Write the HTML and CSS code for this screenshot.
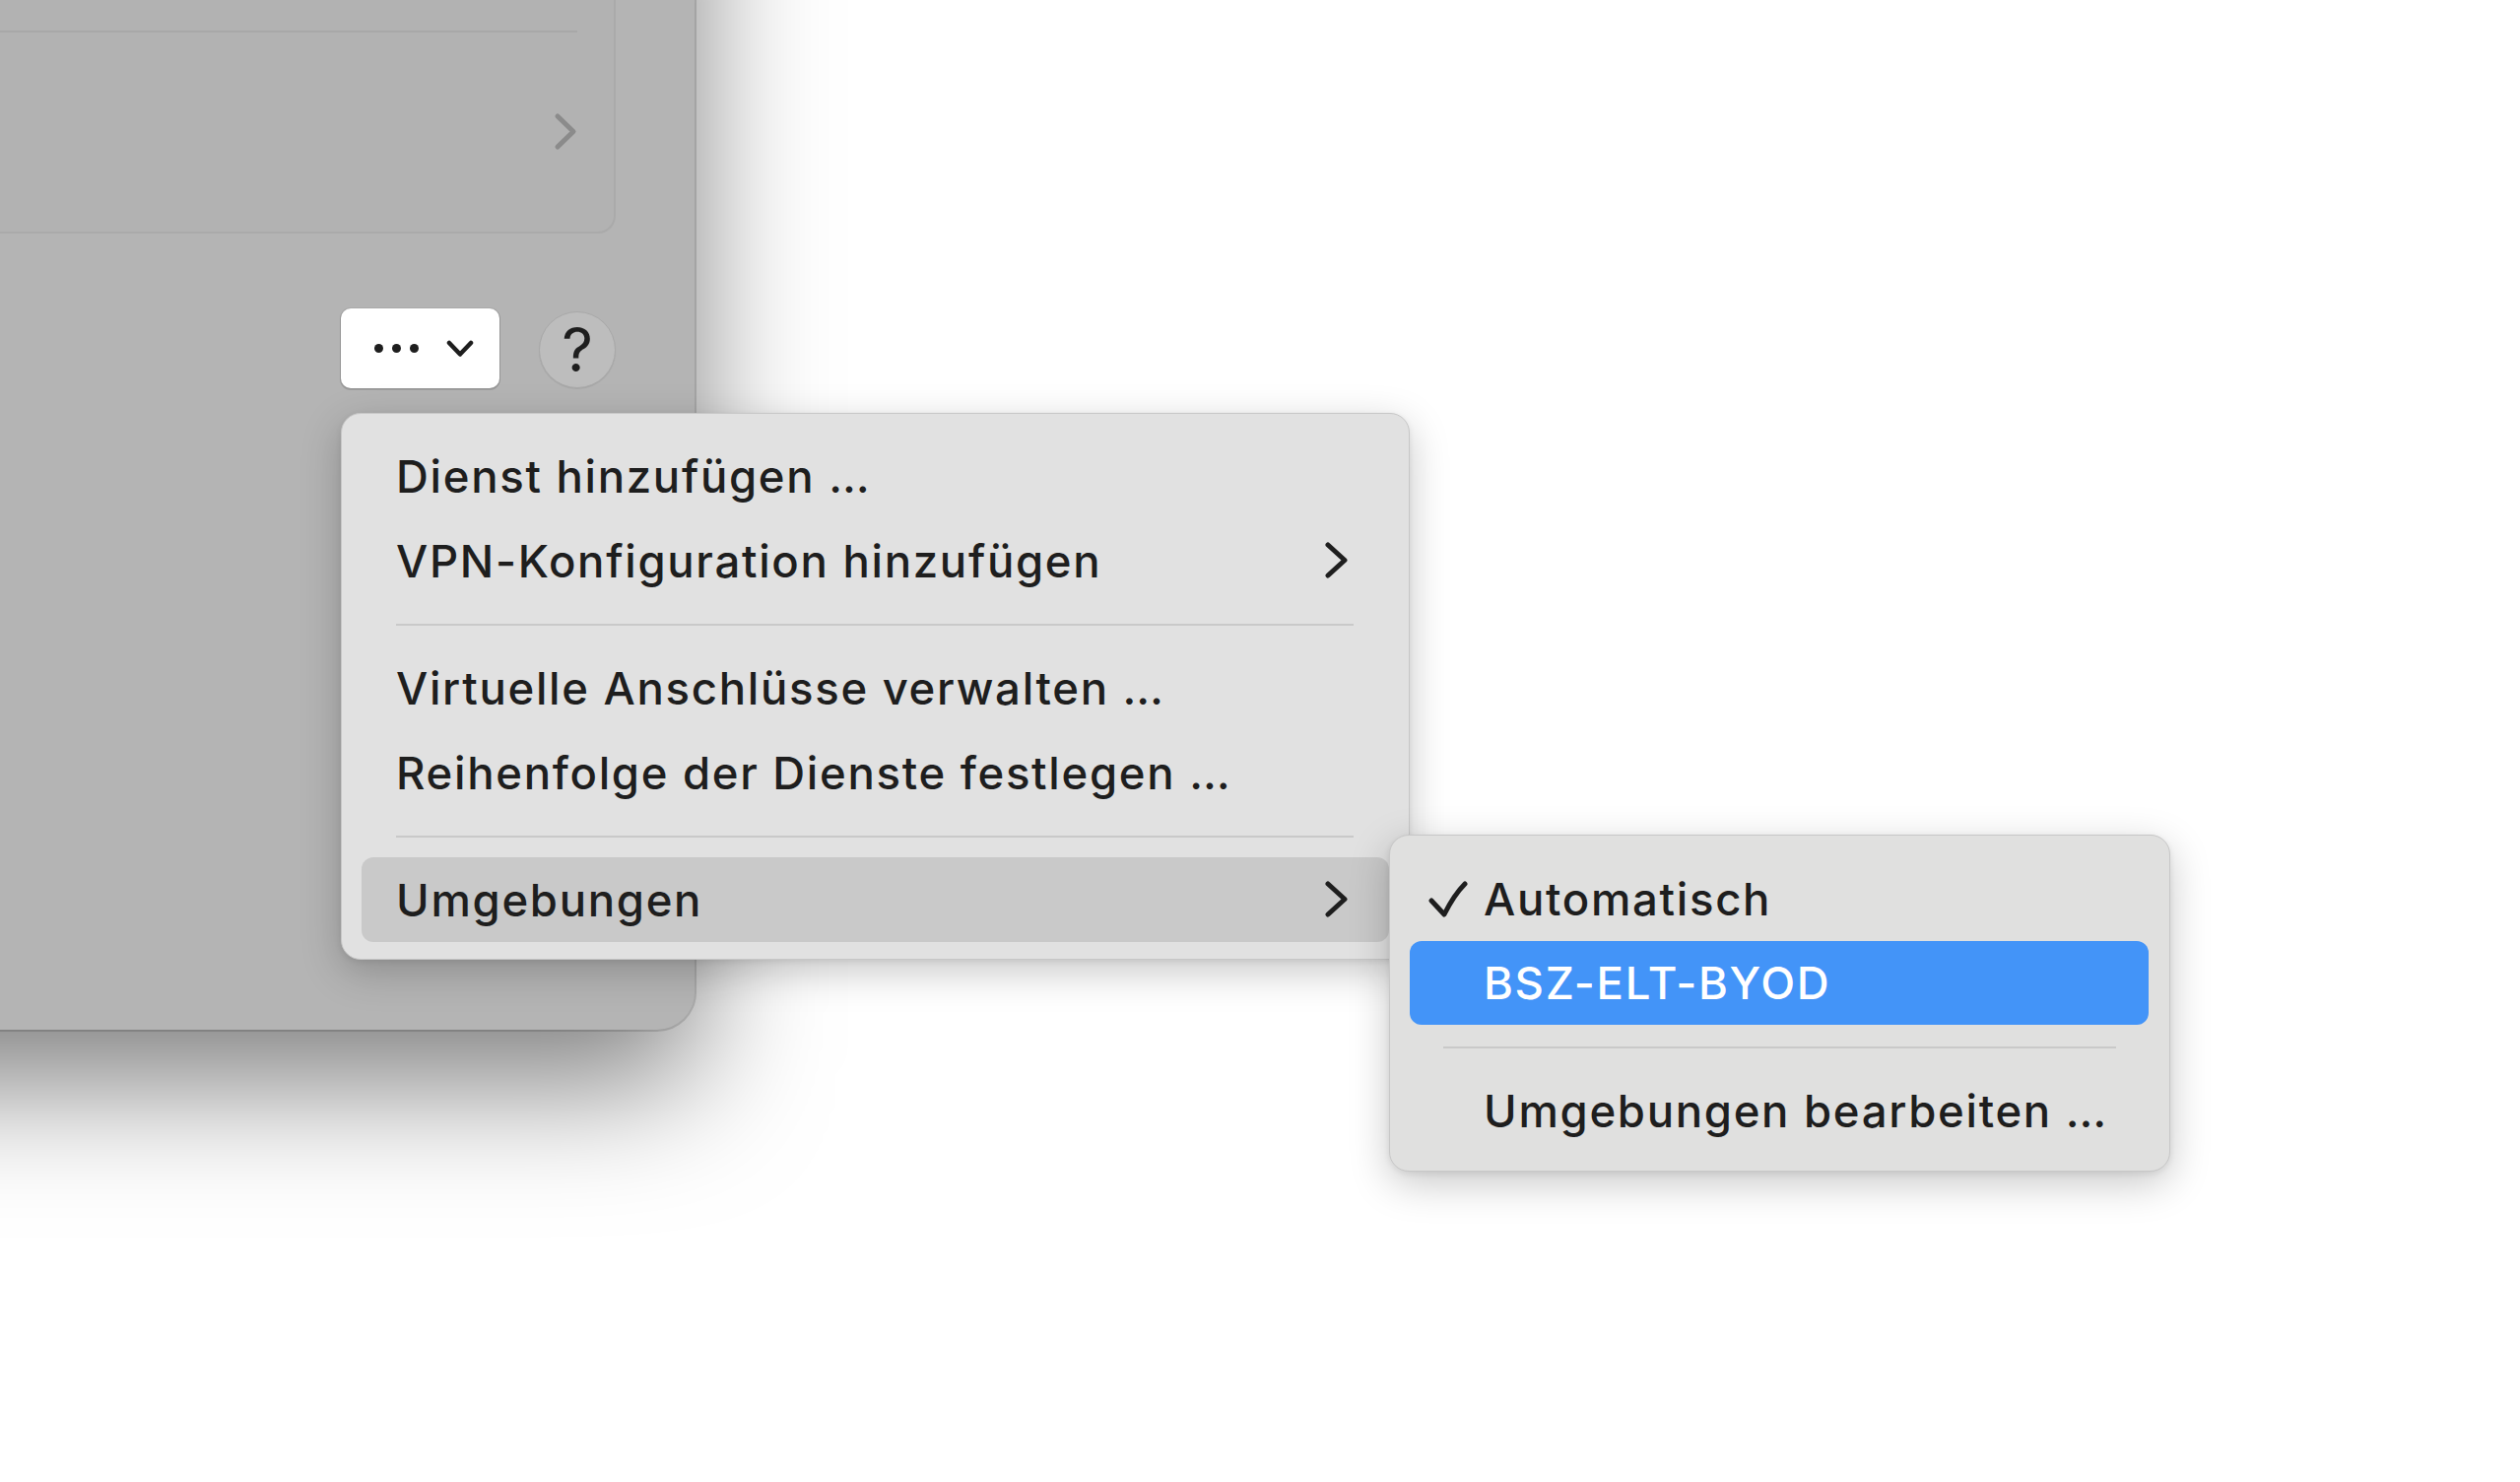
FILE: index.html
```html
<!DOCTYPE html>
<html lang="de">
<head>
<meta charset="utf-8">
<title>Netzwerk</title>
<link rel="stylesheet" href="styles.css">
</head>
<body>
<div class="desktop">
  <div class="window">
    <div class="card">
      <div class="card-top"></div>
      <div class="card-row">
        <svg class="card-chevron" width="24" height="40" viewBox="0 0 24 40"><path d="M4 4 L20 19.5 L4 35" fill="none" stroke="#8b8b8b" stroke-width="5" stroke-linecap="round" stroke-linejoin="round"/></svg>
      </div>
    </div>
    <div class="footer">
      <button class="more-btn" type="button">
        <span class="dots"><i></i><i></i><i></i></span>
        <svg width="28" height="20" viewBox="0 0 28 20"><path d="M3 4 L14 15.5 L25 4" fill="none" stroke="#1e1e1e" stroke-width="4.5" stroke-linecap="round" stroke-linejoin="round"/></svg>
      </button>
      <button class="help-btn" type="button">?</button>
    </div>
  </div>

  <div class="menu main-menu">
    <div class="item">Dienst hinzufügen …</div>
    <div class="item has-sub">VPN-Konfiguration hinzufügen
      <svg class="chev" width="26" height="40" viewBox="0 0 26 40"><path d="M4 3 L21 18.5 L4 34" fill="none" stroke="#1e1e1e" stroke-width="5" stroke-linecap="round" stroke-linejoin="round"/></svg>
    </div>
    <div class="sep"></div>
    <div class="item">Virtuelle Anschlüsse verwalten …</div>
    <div class="item">Reihenfolge der Dienste festlegen …</div>
    <div class="sep"></div>
    <div class="item has-sub active">Umgebungen
      <svg class="chev" width="26" height="40" viewBox="0 0 26 40"><path d="M4 3 L21 18.5 L4 34" fill="none" stroke="#1e1e1e" stroke-width="5" stroke-linecap="round" stroke-linejoin="round"/></svg>
    </div>
  </div>

  <div class="menu sub-menu">
    <div class="item">
      <svg class="check" width="40" height="38" viewBox="0 0 40 38"><path d="M3 20 L16 34 C 22 22, 28 12, 37 3" fill="none" stroke="#1e1e1e" stroke-width="5" stroke-linecap="round" stroke-linejoin="round"/></svg>
      Automatisch
    </div>
    <div class="item selected">BSZ-ELT-BYOD</div>
    <div class="sep"></div>
    <div class="item">Umgebungen bearbeiten …</div>
  </div>
</div>
</body>
</html>
```
FILE: styles.css
```css
* { box-sizing: border-box; }
html, body {
  margin: 0;
  padding: 0;
  background: #ffffff;
}
body {
  width: 2558px;
  height: 1504px;
  overflow: hidden;
  font-family: Inter, "Noto Sans", "Liberation Sans", sans-serif;
  color: #1e1e1e;
}
.desktop {
  position: relative;
  width: 2558px;
  height: 1504px;
  overflow: hidden;
  background: #ffffff;
}

/* Window (dimmed) */
.window {
  position: absolute;
  left: -200px;
  top: -200px;
  width: 905px;
  height: 1245px;
  background: #b4b4b4;
  border-radius: 0 0 38px 0;
  box-shadow: 0 0 0 2px rgba(0, 0, 0, 0.14), 0 55px 130px rgba(0, 0, 0, 0.5);
  padding: 100px 80px 0 150px;
  display: flex;
  flex-direction: column;
}
.card {
  height: 337px;
  border: 2px solid #aaaaaa;
  border-top: none;
  border-left: none;
  border-radius: 0 0 18px 0;
  background: #b2b2b2;
  display: flex;
  flex-direction: column;
}
.card-top {
  height: 133px;
  margin-right: 37px;
  border-bottom: 2px solid #a8a8a8;
}
.card-row {
  flex: 1;
  display: flex;
  justify-content: flex-end;
  align-items: center;
  padding-right: 37px;
}
.card-chevron { display: block; }

.footer {
  margin-top: 79px;
  display: flex;
  justify-content: flex-end;
  align-items: center;
  gap: 40px;
}
.more-btn {
  width: 161px;
  height: 81px;
  border: none;
  border-radius: 10px;
  background: #ffffff;
  box-shadow: 0 1px 0 1px rgba(0, 0, 0, 0.12), 0 0 0 1px rgba(0, 0, 0, 0.06);
  display: flex;
  align-items: center;
  justify-content: flex-start;
  padding: 0 0 0 34px;
  gap: 28px;
  margin-top: -4px;
}
.more-btn svg { display: block; margin-top: 2px; }
.dots { display: flex; gap: 9px; }
.dots i {
  display: block;
  width: 9px;
  height: 9px;
  border-radius: 50%;
  background: #1e1e1e;
}
.help-btn {
  width: 78px;
  height: 78px;
  border-radius: 50%;
  border: 1.5px solid #a9a9a9;
  background: #bdbdbd;
  font-family: Inter, "Noto Sans", sans-serif;
  font-size: 62px;
  line-height: 1;
  color: #1e1e1e;
  padding: 0;
  display: flex;
  align-items: center;
  justify-content: center;
  box-shadow: 0 1px 1px rgba(0, 0, 0, 0.08);
}

/* Menus */
.menu {
  position: absolute;
  background: #e1e1e1;
  border: 1.5px solid #c7c7c7;
  border-radius: 20px;
  box-shadow: 0 12px 40px rgba(0, 0, 0, 0.22), 0 2px 6px rgba(0, 0, 0, 0.08);
  font-size: 45.5px;
  font-weight: 500;
  letter-spacing: 1.7px;
}
.main-menu {
  left: 346px;
  top: 419px;
  width: 1085px;
  height: 555px;
  padding: 20px 20px 17px 20px;
}
.sub-menu {
  left: 1410px;
  top: 847px;
  width: 793px;
  height: 342px;
  padding: 21px 21px 18px 20px;
  background: #e0e0df;
}
.item {
  height: 86px;
  display: flex;
  align-items: center;
  padding: 0 40px 0 35px;
  border-radius: 12px;
  white-space: nowrap;
}
.item.has-sub { justify-content: space-between; }
.item.active { background: #c9c9c9; }
.chev { display: block; margin-top: 2px; }
.sep {
  height: 43px;
  display: flex;
  align-items: center;
  padding: 0 36px 0 35px;
}
.sep::before {
  content: "";
  display: block;
  width: 100%;
  height: 2px;
  background: #c9c9c9;
}
.sub-menu .item {
  padding-left: 75px;
  position: relative;
}
.sub-menu .sep { padding: 0 33px 0 34px; }
.check {
  position: absolute;
  left: 19px;
  top: 25px;
}
.item.selected {
  background: #4394f8;
  color: #ffffff;
  height: 85px;
  margin-bottom: 1px;
}
```
